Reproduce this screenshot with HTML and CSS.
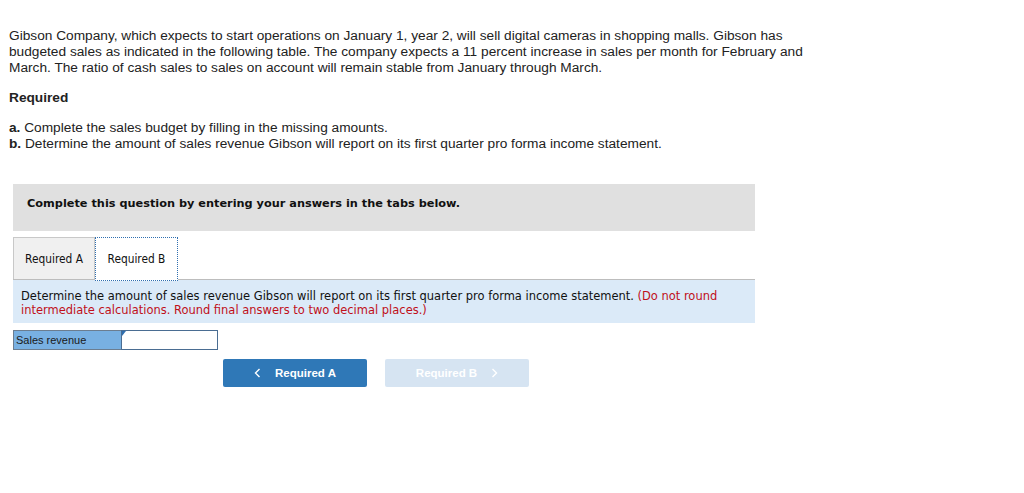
FILE: index.html
```html
<!DOCTYPE html>
<html>
<head>
<meta charset="utf-8">
<link rel="stylesheet" href="styles.css">
</head>
<body>
<div class="page">
  <p class="intro">Gibson Company, which expects to start operations on January 1, year 2, will sell digital cameras in shopping malls. Gibson has budgeted sales as indicated in the following table. The company expects a 11 percent increase in sales per month for February and March. The ratio of cash sales to sales on account will remain stable from January through March.</p>
  <p class="req-title">Required</p>
  <p class="req-list"><b>a.</b> Complete the sales budget by filling in the missing amounts.<br><b>b.</b> Determine the amount of sales revenue Gibson will report on its first quarter pro forma income statement.</p>

  <div class="panel">
    <div class="instruct">Complete this question by entering your answers in the tabs below.</div>
    <div class="tabs">
      <div class="tab">Required A</div>
      <div class="tab active">Required B</div>
    </div>
    <div class="question">Determine the amount of sales revenue Gibson will report on its first quarter pro forma income statement. <span class="note">(Do not round intermediate calculations. Round final answers to two decimal places.)</span></div>
    <div class="answer-row">
      <div class="label">Sales revenue</div>
      <div class="input"><span class="flag"></span></div>
    </div>
    <div class="nav">
      <div class="btn prev"><svg class="chev" width="7" height="10" viewBox="0 0 7 10"><path d="M5.5 1 L1.5 5 L5.5 9" fill="none" stroke="#fff" stroke-width="1.4"/></svg>Required A</div>
      <div class="btn next">Required B<svg class="chev right" width="7" height="10" viewBox="0 0 7 10"><path d="M1.5 1 L5.5 5 L1.5 9" fill="none" stroke="#fff" stroke-width="1.4"/></svg></div>
    </div>
  </div>
</div>
</body>
</html>
```

FILE: styles.css
```css
html, body { margin: 0; padding: 0; background: #fff; }
.page { padding: 28px 0 0 9px; font-family: "Liberation Sans", Arial, sans-serif; color: #222; }
.intro { margin: 0; width: 800px; font-size: 13.7px; line-height: 16px; }
.req-title { margin: 14px 0 0; font-weight: bold; font-size: 13.7px; line-height: 16px; }
.req-list { margin: 14px 0 0; font-size: 13.7px; line-height: 16px; }
.req-list b { font-weight: bold; }
.panel { margin: 32px 0 0 4px; width: 742px; }
.instruct { background: #e0e0e0; height: 47px; box-sizing: border-box; padding: 13px 0 0 14px; font-family: "DejaVu Sans", Verdana, sans-serif; font-weight: bold; font-size: 11.3px; line-height: 14px; color: #111; }
.tabs { display: flex; margin-top: 6px; border-bottom: 1px solid #bdbdbd; height: 42px; }
.tab { width: 80px; height: 41px; display: flex; align-items: center; justify-content: center; font-family: "DejaVu Sans Condensed", "DejaVu Sans", sans-serif; font-size: 11.8px; color: #111; background: #f0f0f0; border: 1px solid #c8c8c8; border-bottom: none; }
.tab.active { background: #fff; border: 1px dotted #2f6fb0; width: 81px; height: 42px; margin-bottom: -2px; }
.question { background: #dbeaf8; padding: 9px 8px 6px 8px; font-family: "DejaVu Sans Condensed", "DejaVu Sans", sans-serif; font-size: 12.75px; line-height: 14px; color: #111; height: 28px; }
.note { color: #c0101a; }
.answer-row { display: flex; margin-top: 7px; height: 20px; }
.label { width: 105px; background: #78b0e2; border: 1px solid #6b7d90; border-right: none; font-family: "Liberation Sans", Arial, sans-serif; font-size: 11px; color: #1a1a1a; display: flex; align-items: center; padding-left: 2px; }
.input { position: relative; width: 95px; border: 1px solid #4a6d92; background: #fff; }
.flag { position: absolute; left: 0; top: 0; width: 0; height: 0; border-top: 5px solid #2f6fb0; border-right: 4px solid transparent; }
.nav { display: flex; margin: 9px 0 0 210px; gap: 18px; }
.btn { width: 144px; height: 28px; border-radius: 2px; display: flex; align-items: center; justify-content: center; font-family: "Liberation Sans", Arial, sans-serif; font-weight: bold; font-size: 11.5px; color: #fff; }
.btn.prev { background: #2f78b7; }
.btn.next { background: #d6e4f2; }
.chev { margin-right: 14px; }
.chev.right { margin: 0 0 0 14px; }
```
